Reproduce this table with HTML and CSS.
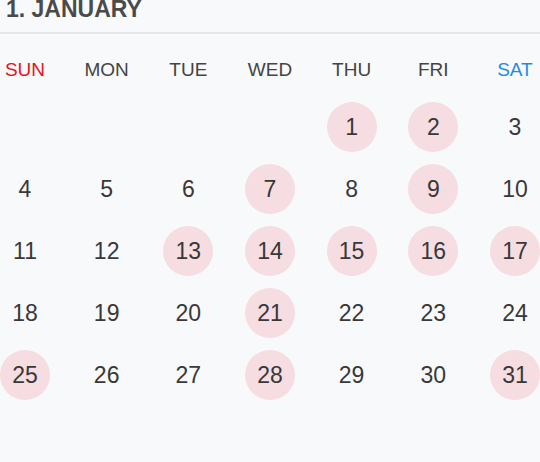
FILE: index.html
```html
<!DOCTYPE html>
<html>
<head>
<meta charset="utf-8">
<link rel="stylesheet" href="styles.css">
</head>
<body>
<div class="calendar">
  <div class="month-title">1. JANUARY</div>
  <div class="grid weekdays">
    <div class="wd sun">SUN</div>
    <div class="wd">MON</div>
    <div class="wd">TUE</div>
    <div class="wd">WED</div>
    <div class="wd">THU</div>
    <div class="wd">FRI</div>
    <div class="wd sat">SAT</div>
  </div>
  <div class="grid days">
    <div class="day"></div>
    <div class="day"></div>
    <div class="day"></div>
    <div class="day"></div>
    <div class="day mark">1</div>
    <div class="day mark">2</div>
    <div class="day">3</div>
    <div class="day">4</div>
    <div class="day">5</div>
    <div class="day">6</div>
    <div class="day mark">7</div>
    <div class="day">8</div>
    <div class="day mark">9</div>
    <div class="day">10</div>
    <div class="day">11</div>
    <div class="day">12</div>
    <div class="day mark">13</div>
    <div class="day mark">14</div>
    <div class="day mark">15</div>
    <div class="day mark">16</div>
    <div class="day mark">17</div>
    <div class="day">18</div>
    <div class="day">19</div>
    <div class="day">20</div>
    <div class="day mark">21</div>
    <div class="day">22</div>
    <div class="day">23</div>
    <div class="day">24</div>
    <div class="day mark">25</div>
    <div class="day">26</div>
    <div class="day">27</div>
    <div class="day mark">28</div>
    <div class="day">29</div>
    <div class="day">30</div>
    <div class="day mark">31</div>
  </div>
</div>
</body>
</html>
```

FILE: styles.css
```css
html, body {
  margin: 0;
  padding: 0;
  background: #f8f9fb;
}
body {
  width: 540px;
  height: 462px;
  overflow: hidden;
  font-family: "Liberation Sans", Arial, sans-serif;
  color: #3a3a3a;
}
.calendar {
  width: 540px;
}
.month-title {
  height: 34px;
  box-sizing: border-box;
  padding-left: 6px;
  font-size: 23px;
  font-weight: bold;
  line-height: 19px;
  color: #4a4a4a;
  border-bottom: 2px solid #e6e7ea;
}
.grid {
  display: grid;
  grid-template-columns: repeat(7, 50px);
  justify-content: space-between;
}
.weekdays {
  margin-top: 21px;
  height: 30px;
}
.wd {
  font-size: 19px;
  line-height: 30px;
  text-align: center;
  color: #444;
  white-space: nowrap;
}
.wd.sun { color: #e8121b; }
.wd.sat { color: #1e8ce6; }
.days {
  margin-top: 17px;
  row-gap: 12px;
}
.day {
  width: 50px;
  height: 50px;
  border-radius: 50%;
  display: flex;
  align-items: center;
  justify-content: center;
  font-size: 23px;
  color: #383838;
}
.day.mark {
  background: #f5dde1;
}
```
